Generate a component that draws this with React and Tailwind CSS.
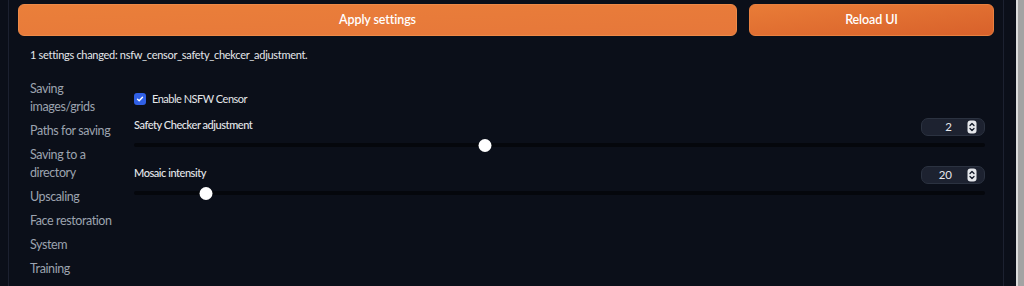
import { useState } from 'react';

const sections = [
  'Saving images/grids',
  'Paths for saving',
  'Saving to a directory',
  'Upscaling',
  'Face restoration',
  'System',
  'Training',
];

function Spinner() {
  return (
    <svg width="10" height="14" viewBox="0 0 10 14" className="shrink-0">
      <rect x="0.5" y="0.5" width="9" height="13" rx="3" fill="#e5e7eb" />
      <path d="M3 5.5 L5 3.5 L7 5.5" fill="none" stroke="#111827" strokeWidth="1.3" strokeLinecap="round" strokeLinejoin="round" />
      <path d="M3 8.5 L5 10.5 L7 8.5" fill="none" stroke="#111827" strokeWidth="1.3" strokeLinecap="round" strokeLinejoin="round" />
    </svg>
  );
}

function SliderSetting({ label, value, pct }) {
  return (
    <div>
      <div className="flex h-[18px] items-center justify-between">
        <span className="-mt-[3px] text-[11px] font-medium tracking-[-0.45px] text-[#e5e7eb]">{label}</span>
        <div className="flex h-[18px] w-[64px] items-center justify-end rounded-[7px] border border-[#2b3240] bg-[#1d2230] pr-[7px]">
          <span className="text-[11.5px] text-[#e5e7eb]">{value}</span>
          <span className="ml-[15px]"><Spinner /></span>
        </div>
      </div>
      <div className="relative mt-[2px] flex h-[14px] items-center">
        <div className="h-[4px] w-full rounded-full bg-[#05070c]" />
        <div
          className="absolute top-[1px] h-[13px] w-[13px] -translate-x-1/2 rounded-full bg-white"
          style={{ left: `${pct}%` }}
        />
      </div>
    </div>
  );
}

export default function App() {
  const [enabled, setEnabled] = useState(true);

  return (
    <div className="flex h-[286px] w-[1024px] overflow-hidden bg-[#0b0f19] font-['Lato',sans-serif]">
      <div className="ml-[8px] w-[996px] border-x border-[#1c2130] pl-[9px] pr-[9px]">
        {/* Buttons */}
        <div className="flex gap-[12px] pt-[4px]">
          <button className="h-[32px] w-[719px] rounded-[6px] border border-[#ee8a48] bg-gradient-to-br from-[#ea7f3a] to-[#e6773a] text-[12.5px] font-semibold tracking-[-0.1px] text-white">
            Apply settings
          </button>
          <button className="h-[32px] flex-1 rounded-[6px] border border-[#e9803f] bg-gradient-to-br from-[#e97c37] to-[#d8612b] text-[12.5px] font-semibold tracking-[-0.1px] text-white">
            Reload UI
          </button>
        </div>

        <p className="mt-[11px] pl-[12px] text-[11px] leading-[16px] tracking-[-0.3px] text-[#e5e7eb]">
          1 settings changed: nsfw_censor_safety_chekcer_adjustment.
        </p>

        <div className="mt-[16px] flex">
          {/* Sidebar */}
          <div className="flex w-[116px] flex-col gap-[6px] pl-[12px] pt-[1px]">
            {sections.map((s) => (
              <div key={s} className="w-[94px] text-[12.5px] leading-[18px] tracking-[-0.4px] text-[#9ca3af]">
                {s}
              </div>
            ))}
          </div>

          {/* Settings */}
          <div className="flex-1 pr-[9px] pt-[13px]">
            <label className="flex h-[14px] items-center gap-[6px]">
              <span
                onClick={() => setEnabled(!enabled)}
                className="flex h-[12px] w-[12px] items-center justify-center rounded-[3px] bg-[#3060e6]"
              >
                {enabled && (
                  <svg width="8" height="8" viewBox="0 0 8 8">
                    <path d="M1.5 4.2 L3.2 5.8 L6.5 2.2" fill="none" stroke="white" strokeWidth="1.4" strokeLinecap="round" strokeLinejoin="round" />
                  </svg>
                )}
              </span>
              <span className="text-[11px] tracking-[-0.5px] text-[#e5e7eb]">Enable NSFW Censor</span>
            </label>

            <div className="mt-[12px] flex flex-col gap-[14px]">
              <SliderSetting label="Safety Checker adjustment" value="2" pct={41.2} />
              <SliderSetting label="Mosaic intensity" value="20" pct={8.5} />
            </div>
          </div>
        </div>
      </div>

      {/* Scrollbar */}
      <div className="ml-[12px] w-[8px] border-l-2 border-[#dcdcdc] bg-[#a3a3a3]" />
    </div>
  );
}
